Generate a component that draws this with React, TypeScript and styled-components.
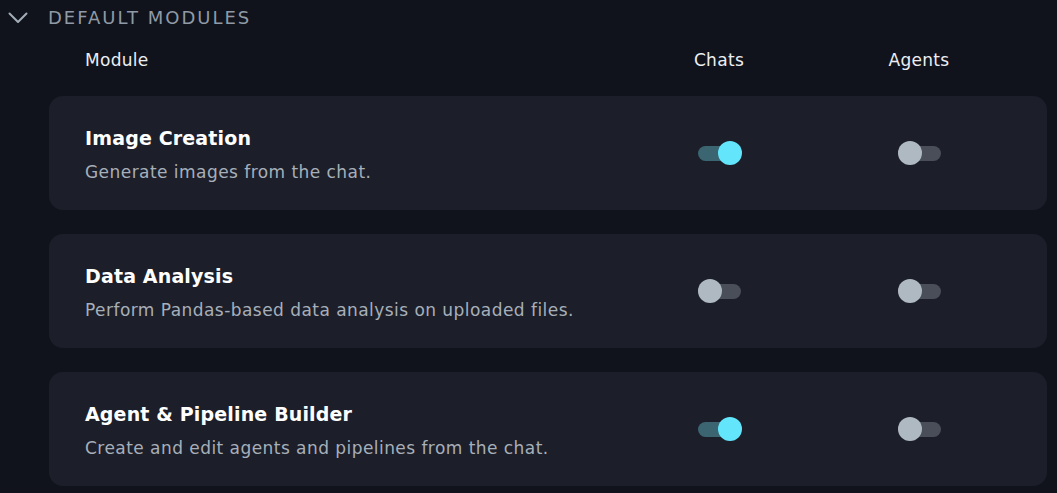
import React, { useState } from "react";
import styled, { createGlobalStyle } from "styled-components";

const GlobalStyle = createGlobalStyle`
  html, body {
    margin: 0;
    padding: 0;
    background: #10131c;
  }
  body {
    font-family: "DejaVu Sans", "Open Sans", sans-serif;
    color: #ffffff;
  }
`;

const Page = styled.div`
  width: 1057px;
  height: 493px;
  overflow: hidden;
  background: #10131c;
  box-sizing: border-box;
  padding: 0 10px 0 8px;
`;

const SectionHeader = styled.div`
  display: flex;
  align-items: center;
  gap: 20px;
  height: 35px;
`;

const HeaderTitle = styled.span`
  font-size: 18px;
  letter-spacing: 2px;
  text-transform: uppercase;
  color: #8f9aa6;
`;

const SectionBody = styled.div`
  padding-left: 41px;
  display: flex;
  flex-direction: column;
`;

const Columns = styled.div`
  display: grid;
  grid-template-columns: 1fr 200px 200px;
  align-items: center;
  padding: 0 28px 0 36px;
`;

const ColumnHeads = styled(Columns)`
  height: 50px;
  margin-bottom: 11px;
  font-size: 17px;
  font-weight: 500;
  letter-spacing: 0.3px;
  color: #eceef2;
`;

const HeadCell = styled.span<{ $center?: boolean }>`
  text-align: ${(p) => (p.$center ? "center" : "left")};
`;

const CardList = styled.div`
  display: flex;
  flex-direction: column;
  gap: 24px;
`;

const Card = styled(Columns)`
  height: 114px;
  padding-top: 4px;
  background: #1c1f29;
  border-radius: 14px;
  box-sizing: border-box;
`;

const Info = styled.div`
  display: flex;
  flex-direction: column;
  gap: 10px;
`;

const Title = styled.div`
  font-size: 19px;
  font-weight: 700;
  line-height: 24px;
  letter-spacing: 0.15px;
  color: #ffffff;
`;

const Description = styled.div`
  font-size: 17px;
  line-height: 24px;
  letter-spacing: 0.45px;
  color: #a7afba;
`;

const ToggleCell = styled.div`
  display: flex;
  justify-content: center;
  margin-top: -4px;
`;

const Track = styled.button<{ $on: boolean }>`
  position: relative;
  width: 43px;
  height: 15px;
  padding: 0;
  border: none;
  border-radius: 8px;
  cursor: pointer;
  background: ${(p) => (p.$on ? "#3a6571" : "#4a4e59")};
`;

const Knob = styled.span<{ $on: boolean }>`
  position: absolute;
  top: 50%;
  left: ${(p) => (p.$on ? "20px" : "0")};
  width: 24px;
  height: 24px;
  margin-top: -12px;
  border-radius: 50%;
  background: ${(p) => (p.$on ? "#63e6fb" : "#afb9c2")};
`;

const Toggle = ({ initial }: { initial: boolean }) => {
  const [on, setOn] = useState(initial);
  return (
    <Track $on={on} onClick={() => setOn(!on)} aria-pressed={on}>
      <Knob $on={on} />
    </Track>
  );
};

const Chevron = () => (
  <svg width="20" height="12" viewBox="0 0 20 12" fill="none">
    <path d="M1.5 1.5 L10 10 L18.5 1.5" stroke="#a3adb7" strokeWidth="2" strokeLinecap="round" strokeLinejoin="round" />
  </svg>
);

const modules = [
  { title: "Image Creation", description: "Generate images from the chat.", chats: true, agents: false },
  { title: "Data Analysis", description: "Perform Pandas-based data analysis on uploaded files.", chats: false, agents: false },
  { title: "Agent & Pipeline Builder", description: "Create and edit agents and pipelines from the chat.", chats: true, agents: false },
];

export default function App() {
  return (
    <>
      <GlobalStyle />
      <Page>
        <SectionHeader>
          <Chevron />
          <HeaderTitle>Default Modules</HeaderTitle>
        </SectionHeader>
        <SectionBody>
          <ColumnHeads>
            <HeadCell>Module</HeadCell>
            <HeadCell $center>Chats</HeadCell>
            <HeadCell $center>Agents</HeadCell>
          </ColumnHeads>
          <CardList>
            {modules.map((m) => (
              <Card key={m.title}>
                <Info>
                  <Title>{m.title}</Title>
                  <Description>{m.description}</Description>
                </Info>
                <ToggleCell>
                  <Toggle initial={m.chats} />
                </ToggleCell>
                <ToggleCell>
                  <Toggle initial={m.agents} />
                </ToggleCell>
              </Card>
            ))}
          </CardList>
        </SectionBody>
      </Page>
    </>
  );
}
